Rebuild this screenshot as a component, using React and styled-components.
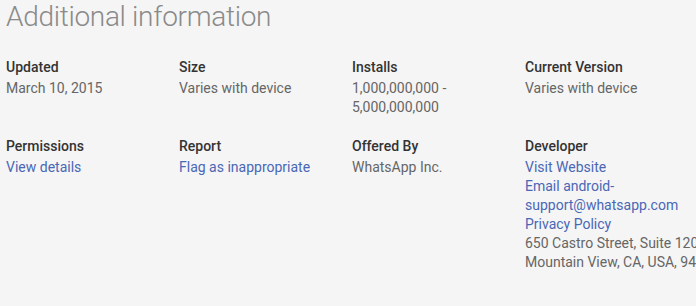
import React from 'react'
import styled, { createGlobalStyle } from 'styled-components'

const Global = createGlobalStyle`
body {
  margin: 0;
  background: #f5f5f5;
  font-family: Roboto, "Liberation Sans", Arial, sans-serif;
  overflow: hidden;
}
`

const Page = styled.div`
padding: 0 0 0 6px;
width: 720px;
`

const Title = styled.h2`
margin: 0;
font-size: 28px;
font-weight: 300;
letter-spacing: -0.3px;
line-height: 34px;
color: #8a8a8a;
`

const Grid = styled.div`
display: grid;
grid-template-columns: repeat(4, 173px);
row-gap: 20px;
margin-top: 24px;
`

const Meta = styled.div`
display: flex;
flex-direction: column;
font-size: 14px;
line-height: 19px;
padding-right: 12px;
`

const Label = styled.div`
font-weight: 500;
color: #333;
margin-bottom: 2px;
`

const Value = styled.div`
color: #666;
white-space: ${p => (p.nowrap ? 'nowrap' : 'normal')};
`

const Link = styled.a`
color: #4a67b5;
text-decoration: none;
`

const items = [
  { label: 'Updated', values: ['March 10, 2015'] },
  { label: 'Size', values: ['Varies with device'] },
  { label: 'Installs', values: ['1,000,000,000 - 5,000,000,000'] },
  { label: 'Current Version', values: ['Varies with device'] },
  { label: 'Permissions', links: ['View details'] },
  { label: 'Report', links: ['Flag as inappropriate'] },
  { label: 'Offered By', values: ['WhatsApp Inc.'] },
  {
    label: 'Developer',
    links: ['Visit Website', 'Email android-support@whatsapp.com', 'Privacy Policy'],
    address: ['650 Castro Street, Suite 120-232', 'Mountain View, CA, USA, 94041'],
  },
]

const App = () => (
  <Page>
    <Global />
    <Title>Additional information</Title>
    <Grid>
      {items.map(it => (
        <Meta key={it.label}>
          <Label>{it.label}</Label>
          {it.values && it.values.map(v => <Value key={v}>{v}</Value>)}
          {it.links && it.links.map(l => (
            <Value key={l}><Link href="#">{l}</Link></Value>
          ))}
          {it.address && it.address.map(a => <Value nowrap key={a}>{a}</Value>)}
        </Meta>
      ))}
    </Grid>
  </Page>
)

export default App
